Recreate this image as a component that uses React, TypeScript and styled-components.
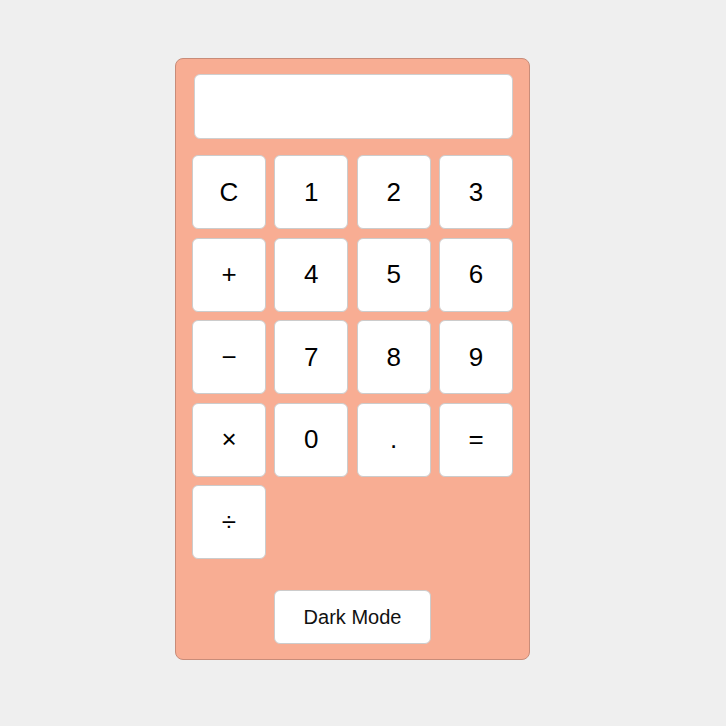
import React from "react";
import styled, { createGlobalStyle } from "styled-components";

const Global = createGlobalStyle`
  html, body { margin: 0; padding: 0; background: #efefef; }
  body { font-family: "Liberation Sans", Arial, sans-serif; }
`;

const Page = styled.div`
  display: flex;
  justify-content: center;
  align-items: flex-start;
  padding-top: 58px;
  padding-right: 21px;
  min-height: 726px;
  box-sizing: border-box;
`;

const Calculator = styled.div`
  width: 321px;
  padding: 15px 16px 15px 16px;
  background: #f8ad93;
  border: 1px solid #c88c79;
  border-radius: 8px;
  display: flex;
  flex-direction: column;
`;

const Display = styled.div`
  box-sizing: border-box;
  width: 319px;
  height: 65px;
  margin-left: 2px;
  background: #fff;
  border: 1px solid #cfcfcf;
  border-radius: 6px;
`;

const Keys = styled.div`
  margin-top: 16px;
  display: grid;
  grid-template-columns: repeat(4, 74px);
  grid-auto-rows: 74px;
  justify-content: space-between;
  row-gap: 8.5px;
`;

const Key = styled.button`
  box-sizing: border-box;
  width: 74px;
  height: 74px;
  padding: 0;
  background: #fff;
  border: 1px solid #cccccc;
  border-radius: 6px;
  font-family: "Liberation Sans", Arial, sans-serif;
  font-size: 26px;
  color: #000;
  display: flex;
  align-items: center;
  justify-content: center;
`;

const ModeButton = styled.button`
  box-sizing: border-box;
  align-self: center;
  margin-top: 31px;
  width: 157px;
  height: 54px;
  background: #fff;
  border: 1px solid #cccccc;
  border-radius: 6px;
  font-family: "Liberation Sans", Arial, sans-serif;
  font-size: 20px;
  color: #111;
`;

const keys = [
  "C", "1", "2", "3",
  "+", "4", "5", "6",
  "\u2212", "7", "8", "9",
  "\u00d7", "0", ".", "=",
  "\u00f7",
];

export default function App() {
  return (
    <>
      <Global />
      <Page>
        <Calculator>
          <Display />
          <Keys>
            {keys.map((k) => (
              <Key key={k}>{k}</Key>
            ))}
          </Keys>
          <ModeButton>Dark Mode</ModeButton>
        </Calculator>
      </Page>
    </>
  );
}
